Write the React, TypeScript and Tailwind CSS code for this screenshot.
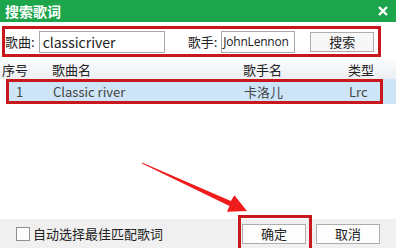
import React from "react";

const FONT = { fontFamily: '"Noto Sans CJK SC", "Liberation Sans", sans-serif' };

export default function App() {
  return (
    <div
      className="relative flex h-[248px] w-[396px] flex-col overflow-hidden bg-white text-[13px] text-[#222]"
      style={FONT}
    >
      {/* title bar */}
      <div className="flex h-[22px] shrink-0 items-center justify-between bg-[#1da54b] pl-[5px] pr-[8px]">
        <span className="text-[14px] font-bold leading-none text-white">搜索歌词</span>
        <svg width="10" height="10" viewBox="0 0 10 10">
          <path d="M1 1L9 9M9 1L1 9" stroke="#fff" strokeWidth="2.4" />
        </svg>
      </div>

      {/* search box */}
      <div className="ml-[2px] mt-[4px] flex h-[31px] w-[379px] shrink-0 items-center border-[3px] border-[#c8181e]">
        <span className="leading-none">歌曲:</span>
        <div className="ml-[4px] flex h-[22px] w-[126px] items-center border border-[#a9a9a9] px-[3px] text-[14px] leading-none">
          classicriver
        </div>
        <span className="ml-[23px] leading-none">歌手:</span>
        <div
          className="ml-[4px] flex h-[22px] w-[74px] items-center overflow-hidden whitespace-nowrap border border-[#a9a9a9] px-[1px] text-[12px] leading-none tracking-[-0.2px]"
          style={{ fontFamily: '"Open Sans", "Liberation Sans", sans-serif' }}
        >
          JohnLennon
        </div>
        <div className="ml-[15px] flex h-[20px] w-[64px] items-center justify-center border border-[#adadad] bg-[#f7f7f7] leading-none">
          搜索
        </div>
      </div>

      {/* header */}
      <div className="mt-[3px] grid h-[19px] shrink-0 grid-cols-[50px_191px_105px_1fr] items-center bg-gradient-to-b from-[#fafbfc] to-[#eceef1] pl-[2px] text-[13px] leading-none">
        <span>序号</span>
        <span>歌曲名</span>
        <span>歌手名</span>
        <span>类型</span>
      </div>

      {/* selected row */}
      <div className="flex h-[25px] shrink-0">
        <div className="w-[6px] bg-white" />
        <div className="grid w-[377px] grid-cols-[44px_191px_105px_1fr] items-center border-[3px] border-[#c8181e] bg-[#cde5f7] leading-none text-[#444]">
          <span className="pl-[7px]">1</span>
          <span>Classic river</span>
          <span>卡洛儿</span>
          <span>Lrc</span>
        </div>
        <div className="flex-1 bg-[#cde5f7]" />
      </div>

      <div className="flex-1" />

      {/* bottom bar */}
      <div className="flex h-[29px] shrink-0 items-center bg-[#f0f0f0]">
        <div className="ml-[16px] h-[14px] w-[14px] border border-[#8f8f8f] bg-[#fdfdfd]" />
        <span className="ml-[3px] leading-none">自动选择最佳匹配歌词</span>
        <div className="ml-auto mr-[16px] flex gap-[10px]">
          <div className="flex h-[20px] w-[64px] items-center justify-center border border-[#adadad] bg-[#fdfdfd] leading-none">
            确定
          </div>
          <div className="flex h-[20px] w-[64px] items-center justify-center border border-[#adadad] bg-[#fdfdfd] leading-none">
            取消
          </div>
        </div>
      </div>

      {/* annotation: red box around OK */}
      <div className="absolute left-[238px] top-[215px] h-[40px] w-[74px] border-[3px] border-[#c8181e]" />

      {/* annotation arrow */}
      <svg className="absolute left-0 top-0" width="396" height="248" viewBox="0 0 396 248">
        <polygon
          points="142,162.6 230.9,200.9 234.4,195.3 247,211 226.9,211.7 229.5,206.0 142,163.4"
          fill="#ee1c1c"
        />
      </svg>
    </div>
  );
}
